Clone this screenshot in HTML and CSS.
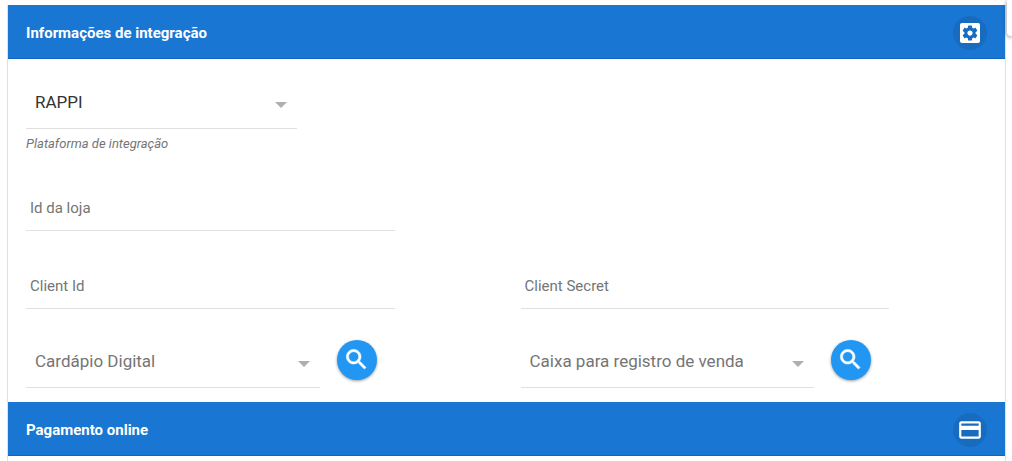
FILE: index.html
```
<!DOCTYPE html>
<html lang="pt-BR">

<head>
    <meta charset="UTF-8">
    <meta name="viewport" content="width=device-width, initial-scale=1.0">
    <title>Integração</title>
    <link rel="stylesheet" href="styles.css">
</head>

<body>
    <main class="card">
        <header class="section-header">
            <h2>Informações de integração</h2>
            <button type="button" class="header-btn" aria-label="Configurações">
                <svg viewBox="0 0 24 24" width="24" height="24">
                    <rect x="2" y="2" width="20" height="20" rx="2" fill="#fff" />
                    <path fill="#186cc0" transform="translate(3 3) scale(.75)" d="M19.43 12.98c.04-.32.07-.64.07-.98s-.03-.66-.07-.98l2.11-1.65c.19-.15.24-.42.12-.64l-2-3.46c-.12-.22-.39-.3-.61-.22l-2.49 1c-.52-.4-1.08-.73-1.69-.98l-.38-2.65C14.46 2.18 14.25 2 14 2h-4c-.25 0-.46.18-.49.42l-.38 2.65c-.61.25-1.17.59-1.69.98l-2.49-1c-.23-.09-.49 0-.61.22l-2 3.46c-.13.22-.07.49.12.64l2.11 1.65c-.04.32-.07.65-.07.98s.03.66.07.98l-2.11 1.65c-.19.15-.24.42-.12.64l2 3.46c.12.22.39.3.61.22l2.49-1c.52.4 1.08.73 1.69.98l.38 2.65c.03.24.24.42.49.42h4c.25 0 .46-.18.49-.42l.38-2.65c.61-.25 1.17-.59 1.69-.98l2.49 1c.23.09.49 0 .61-.22l2-3.46c.12-.22.07-.49-.12-.64l-2.11-1.65zM12 15.5c-1.93 0-3.5-1.57-3.5-3.5s1.57-3.5 3.5-3.5 3.5 1.57 3.5 3.5-1.57 3.5-3.5 3.5z" />
                </svg>
            </button>
        </header>

        <form class="section-body">
            <div class="column wide">
                <div class="select-box platform">
                    <select id="platform">
                        <option>RAPPI</option>
                    </select>
                </div>
                <label class="hint" for="platform">Plataforma de integração</label>
            </div>

            <div class="column wide">
                <input type="text" id="store-id" class="text-field" placeholder="Id da loja" aria-label="Id da loja">
            </div>

            <div class="column">
                <input type="text" id="client-id" class="text-field" placeholder="Client Id" aria-label="Client Id">
            </div>
            <div class="column">
                <input type="text" id="client-secret" class="text-field" placeholder="Client Secret" aria-label="Client Secret">
            </div>

            <div class="column search-row">
                <div class="select-box">
                    <select id="menu" class="empty" aria-label="Cardápio Digital">
                        <option>Cardápio Digital</option>
                    </select>
                </div>
                <button type="button" class="search-btn" aria-label="Buscar cardápio">
                    <svg viewBox="0 0 24 24" width="27" height="27">
                        <path d="M15.5 14h-.79l-.28-.27C15.41 12.59 16 11.11 16 9.5 16 5.91 13.09 3 9.5 3S3 5.91 3 9.5 5.91 16 9.5 16c1.61 0 3.09-.59 4.23-1.57l.27.28v.79l5 4.99L20.49 19l-4.99-5zm-6 0C7.01 14 5 11.99 5 9.5S7.01 5 9.5 5 14 7.01 14 9.5 11.99 14 9.5 14z" />
                    </svg>
                </button>
            </div>
            <div class="column search-row">
                <div class="select-box">
                    <select id="register" class="empty" aria-label="Caixa para registro de venda">
                        <option>Caixa para registro de venda</option>
                    </select>
                </div>
                <button type="button" class="search-btn" aria-label="Buscar caixa">
                    <svg viewBox="0 0 24 24" width="27" height="27">
                        <path d="M15.5 14h-.79l-.28-.27C15.41 12.59 16 11.11 16 9.5 16 5.91 13.09 3 9.5 3S3 5.91 3 9.5 5.91 16 9.5 16c1.61 0 3.09-.59 4.23-1.57l.27.28v.79l5 4.99L20.49 19l-4.99-5zm-6 0C7.01 14 5 11.99 5 9.5S7.01 5 9.5 5 14 7.01 14 9.5 11.99 14 9.5 14z" />
                    </svg>
                </button>
            </div>
        </form>

        <header class="section-header">
            <h2>Pagamento online</h2>
            <button type="button" class="header-btn" aria-label="Pagamento">
                <svg viewBox="0 0 24 24" width="26" height="26">
                    <path fill="#fff" d="M20 4H4c-1.11 0-1.99.89-1.99 2L2 18c0 1.11.89 2 2 2h16c1.11 0 2-.89 2-2V6c0-1.11-.89-2-2-2zm0 14H4v-6h16v6zm0-10H4V6h16v2z" />
                </svg>
            </button>
        </header>
    </main>

    <div class="side-tab"></div>
</body>

</html>
```
FILE: styles.css
```
:root {
    --primary-color: #1976d2;
    --primary-dark: #1565c0;
    --accent-color: #2196f3;
    --text-color: #333333;
    --muted-color: #757575;
    --line-color: #e0e0e0;
    --font-family: Roboto, sans-serif;
}

* {
    box-sizing: border-box;
}

body {
    margin: 0;
    padding: 5px 7px 0;
    min-height: 100vh;
    display: flex;
    background-color: #ffffff;
    color: var(--text-color);
    font-family: var(--font-family);
    overflow: hidden;
}

.card {
    flex: 1;
    border: 1px solid var(--line-color);
    border-width: 0 1px;
    margin-right: -1px;
}

/* --- Section header --- */
.section-header {
    display: flex;
    justify-content: space-between;
    align-items: center;
    height: 54px;
    padding: 2px 18px 0;
    background-color: var(--primary-color);
    border-bottom: 1px solid var(--primary-dark);
}

.section-header h2 {
    margin: 0;
    font-size: 15px;
    font-weight: 700;
    color: #ffffff;
}

.header-btn {
    display: flex;
    justify-content: center;
    align-items: center;
    width: 34px;
    height: 34px;
    padding: 0;
    border: none;
    border-radius: 50%;
    background-color: #186cc0;
    cursor: pointer;
}

.header-btn svg {
    flex-shrink: 0;
}

/* --- Form --- */
.section-body {
    display: grid;
    grid-template-columns: 1fr 1fr;
    padding: 18px 4px 14px;
}

.column {
    padding: 0 14px;
    margin-bottom: 32px;
}

.wide {
    grid-column: 1 / -1;
    width: 50%;
}

.text-field {
    display: block;
    width: 79%;
    height: 46px;
    padding: 0 4px;
    border: none;
    border-bottom: 1px solid var(--line-color);
    outline: none;
    background: transparent;
    color: var(--text-color);
    font-family: var(--font-family);
    font-size: 15px;
}

.text-field::placeholder {
    color: var(--muted-color);
}

.select-box {
    position: relative;
    width: 63%;
}

.platform {
    width: 58%;
}

.select-box select {
    display: block;
    appearance: none;
    width: 100%;
    height: 52px;
    padding: 0 28px 1px 9px;
    border: none;
    border-bottom: 1px solid var(--line-color);
    border-radius: 0;
    outline: none;
    background: transparent;
    color: var(--text-color);
    font-family: var(--font-family);
    font-size: 17px;
}

.select-box select.empty {
    color: var(--muted-color);
}

.select-box::after {
    content: "";
    position: absolute;
    right: 10px;
    top: 25px;
    border: 6px solid transparent;
    border-top-color: #afafaf;
    border-bottom: none;
    pointer-events: none;
}

.hint {
    display: block;
    margin-top: 6px;
    font-size: 13px;
    line-height: 18px;
    font-style: italic;
    color: var(--muted-color);
}

.search-row {
    display: flex;
    align-items: center;
    gap: 17px;
    margin-top: -5px;
    margin-bottom: 0;
}

.search-btn {
    display: flex;
    flex-shrink: 0;
    width: 40px;
    height: 40px;
    margin-bottom: 4px;
    padding: 6px;
    border: none;
    border-radius: 50%;
    background-color: var(--accent-color);
    box-shadow: 0 1px 3px rgba(0, 0, 0, 0.4);
    cursor: pointer;
}

.search-btn svg {
    flex-shrink: 0;
    fill: #ffffff;
    stroke: #ffffff;
    stroke-width: 0.5;
}

/* Floating tab at the window edge */
.side-tab {
    position: absolute;
    top: 0;
    right: 0;
    width: 5px;
    height: 36px;
    border-radius: 0 0 0 4px;
    background-color: #ffffff;
    box-shadow: 0 1px 4px rgba(0, 0, 0, 0.5);
}
```
